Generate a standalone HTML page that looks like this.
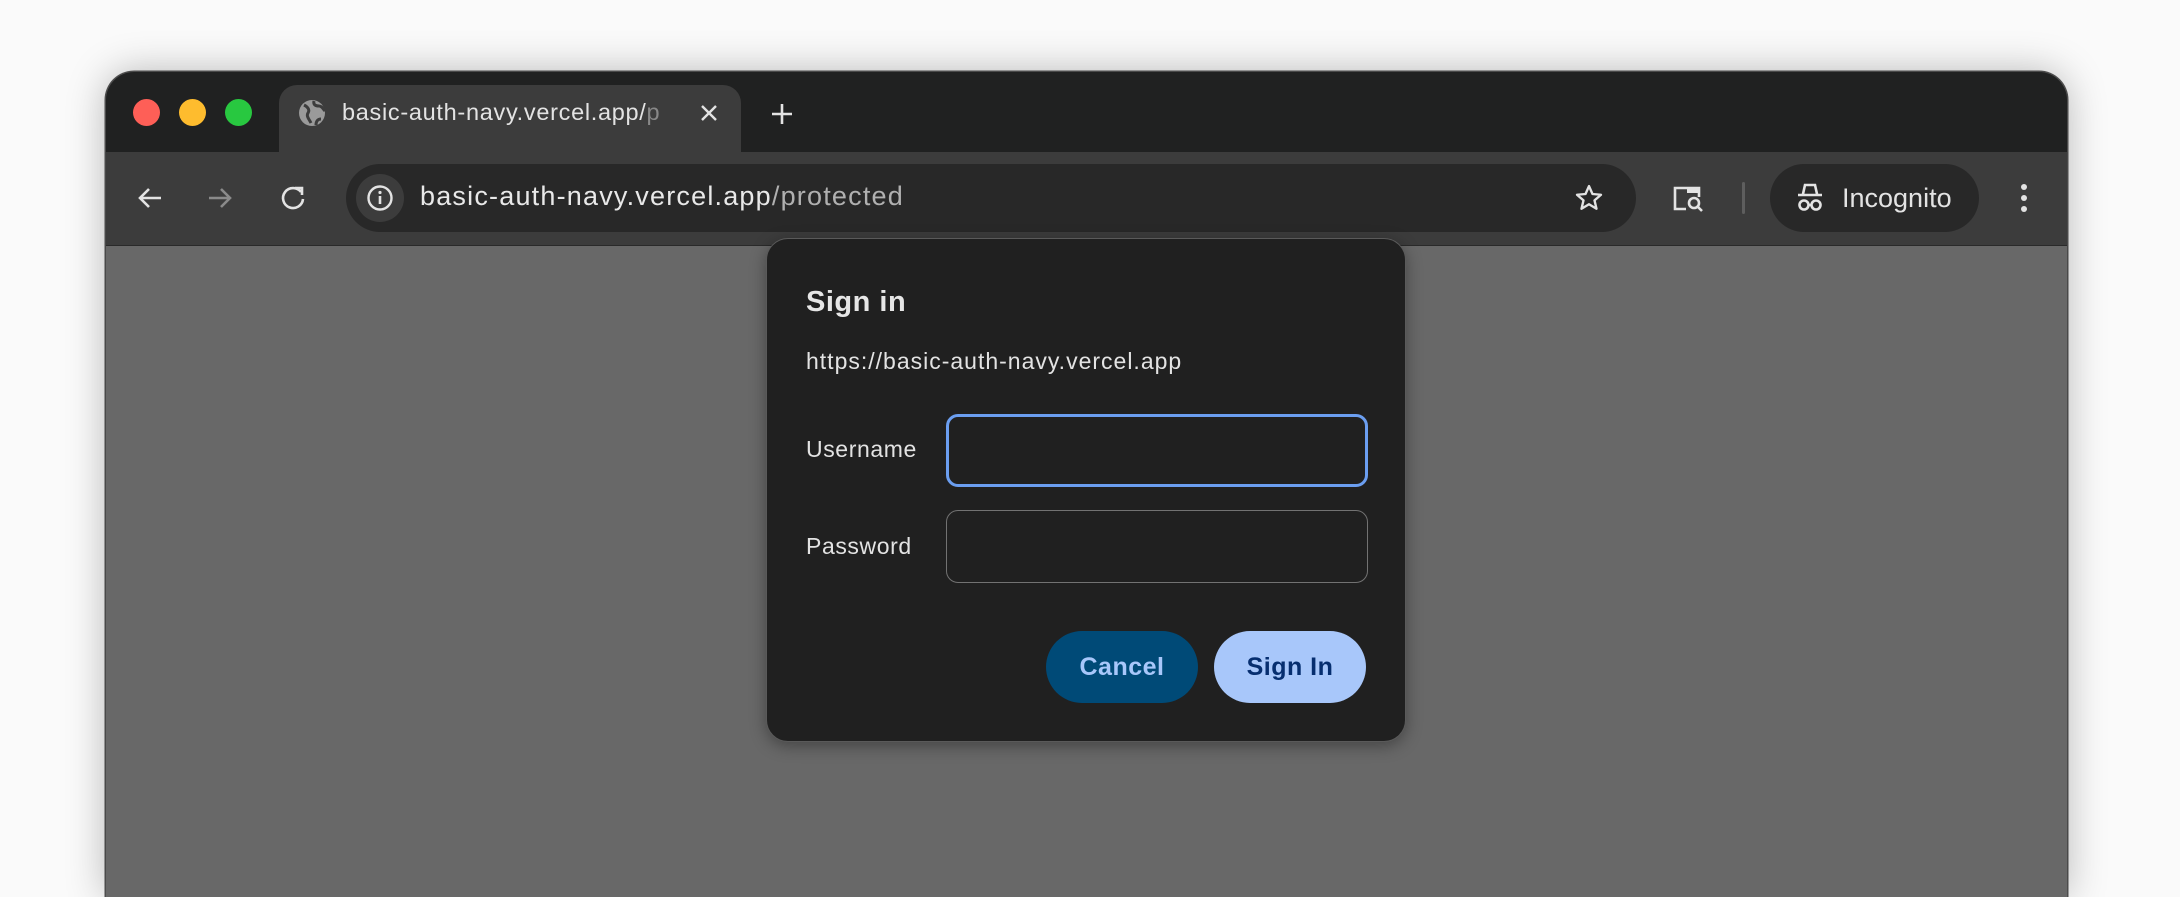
<!DOCTYPE html>
<html><head><meta charset="utf-8"><style>
*{margin:0;padding:0;box-sizing:border-box}
body{width:2180px;height:897px;background:#fafafa;position:relative;overflow:hidden;font-family:"Liberation Sans",sans-serif}
.win{position:absolute;left:106px;top:72px;width:1961px;height:825px;border-radius:28px 28px 0 0;background:#202121;overflow:hidden;box-shadow:0 0 40px rgba(0,0,0,.28),0 0 0 1.5px #555}
.abs{position:absolute}
.tl{position:absolute;top:27px;width:27px;height:27px;border-radius:50%}
.tab{left:173px;top:13px;width:462px;height:70px;background:#3c3c3c;border-radius:18px 18px 0 0}
.toolbar{left:0;top:80px;width:1961px;height:93px;background:#3c3c3c}
.content{left:0;top:173px;width:1961px;height:652px;background:#686868;border-top:1px solid #2a2a2a}
.omni{left:240px;top:12px;width:1290px;height:68px;border-radius:34px;background:#282828}
.txt{color:#e3e3e3;white-space:nowrap}
.dlg{position:absolute;left:766px;top:238px;width:640px;height:504px;background:#202020;border-radius:22px;border:1.5px solid #5a5a5a;box-shadow:0 4px 16px rgba(0,0,0,.35)}
.inp{position:absolute;left:179px;width:422px;height:73px;border-radius:12px}
.btn{position:absolute;top:392px;height:72px;border-radius:36px;font-size:25px;font-weight:bold;text-align:center;line-height:72px;letter-spacing:.5px}
</style></head><body>
<div class="win">
 <div class="tl" style="left:27px;background:#fe5f57"></div>
 <div class="tl" style="left:73px;background:#febc2e"></div>
 <div class="tl" style="left:119px;background:#28c840"></div>
 <div class="abs tab"></div>
 <svg class="abs" style="left:192px;top:27px" width="28" height="28" viewBox="0 0 28 28"><circle cx="14" cy="14" r="13" fill="#9a9a9a"/><path d="M6 6c4 2 6 5 4 8s1 6 3 10M16 2c-1 4 2 5 5 5s4 3 6 5M18 26c0-4 2-6 5-6" stroke="#3c3c3c" stroke-width="3" fill="none"/></svg>
 <div class="abs txt" style="left:236px;top:27px;font-size:23.5px;letter-spacing:.7px;width:340px;overflow:hidden;color:#e3e3e3">basic-auth-navy.vercel.app/<span style="color:#888">p</span></div>
 <svg class="abs" style="left:593px;top:31px" width="20" height="20" viewBox="0 0 20 20"><path d="M3 3L17 17M17 3L3 17" stroke="#e3e3e3" stroke-width="2.4"/></svg>
 <svg class="abs" style="left:664px;top:30px" width="24" height="24" viewBox="0 0 24 24"><path d="M12 2V22M2 12H22" stroke="#e3e3e3" stroke-width="2.6"/></svg>
 <div class="abs toolbar">
  <svg class="abs" style="left:30px;top:32px" width="28" height="28" viewBox="0 0 28 28"><path d="M25 14H5M13 5L4 14L13 23" stroke="#e3e3e3" stroke-width="2.6" fill="none"/></svg>
  <svg class="abs" style="left:100px;top:32px" width="28" height="28" viewBox="0 0 28 28"><path d="M3 14H23M15 5L24 14L15 23" stroke="#8a8a8a" stroke-width="2.6" fill="none"/></svg>
  <svg class="abs" style="left:173px;top:32px" width="28" height="28" viewBox="0 0 28 28"><path d="M22 8A10 10 0 1 0 24 15" stroke="#e3e3e3" stroke-width="2.6" fill="none"/><path d="M16 4H23V11" stroke="#e3e3e3" stroke-width="2.6" fill="none"/></svg>
  <div class="abs omni">
   <div class="abs" style="left:10px;top:10px;width:48px;height:48px;border-radius:50%;background:#3c3c3c"></div>
   <svg class="abs" style="left:20px;top:20px" width="28" height="28" viewBox="0 0 28 28"><circle cx="14" cy="14" r="11.5" stroke="#e3e3e3" stroke-width="2.4" fill="none"/><path d="M14 12V20" stroke="#e3e3e3" stroke-width="2.6"/><circle cx="14" cy="8.5" r="1.6" fill="#e3e3e3"/></svg>
   <div class="abs txt" style="left:74px;top:17px;font-size:27px;letter-spacing:1.2px;color:#e8e8e8">basic-auth-navy.vercel.app<span style="color:#b0b0b0">/protected</span></div>
   <svg class="abs" style="left:1228px;top:19px" width="30" height="30" viewBox="0 0 24 24"><path d="M12 2.5l2.8 6.3 6.8.6-5.2 4.5 1.6 6.7L12 17l-6 3.6 1.6-6.7-5.2-4.5 6.8-.6z" stroke="#e3e3e3" stroke-width="1.9" fill="none" stroke-linejoin="round"/></svg>
  </div>
  <svg class="abs" style="left:1566px;top:31px" width="34" height="32" viewBox="0 0 34 32"><path d="M14 26H3V5H27V14" stroke="#e3e3e3" stroke-width="2.6" fill="none"/><rect x="15" y="5" width="12" height="5" fill="#e3e3e3"/><circle cx="22" cy="20" r="5" stroke="#e3e3e3" stroke-width="2.6" fill="none"/><path d="M25.5 23.5L30 28" stroke="#e3e3e3" stroke-width="2.6"/></svg>
  <div class="abs" style="left:1636px;top:30px;width:3px;height:32px;background:#5e5e5e;border-radius:2px"></div>
  <div class="abs" style="left:1664px;top:12px;width:209px;height:68px;border-radius:34px;background:#282828"></div>
  <svg class="abs" style="left:1688px;top:30px" width="32" height="32" viewBox="0 0 32 32"><path d="M9 12L11 3H21L23 12M4 13H28" stroke="#e3e3e3" stroke-width="2.6" fill="none"/><circle cx="10" cy="23" r="4.5" stroke="#e3e3e3" stroke-width="2.6" fill="none"/><circle cx="22" cy="23" r="4.5" stroke="#e3e3e3" stroke-width="2.6" fill="none"/><path d="M14 23H18" stroke="#e3e3e3" stroke-width="2.4"/></svg>
  <div class="abs txt" style="left:1736px;top:31px;font-size:27px">Incognito</div>
  <div class="abs" style="left:1915px;top:32px;width:6px;height:6px;border-radius:50%;background:#e3e3e3;box-shadow:0 11px 0 #e3e3e3,0 22px 0 #e3e3e3"></div>
 </div>
 <div class="abs content"></div>
</div>
<div class="dlg">
 <div class="abs txt" style="left:39px;top:47px;font-size:29px;font-weight:bold;letter-spacing:.5px;color:#e6e6e6">Sign in</div>
 <div class="abs txt" style="left:39px;top:109px;font-size:23px;letter-spacing:1px">https://basic-auth-navy.vercel.app</div>
 <div class="abs txt" style="left:39px;top:197px;font-size:23px;letter-spacing:.6px">Username</div>
 <div class="inp" style="top:175px;border:3px solid #6b9ef0"></div>
 <div class="abs txt" style="left:39px;top:294px;font-size:23px;letter-spacing:.6px">Password</div>
 <div class="inp" style="top:271px;border:1.5px solid #727272"></div>
 <div class="btn" style="left:279px;width:152px;background:#004a77;color:#a8c7fa">Cancel</div>
 <div class="btn" style="left:447px;width:152px;background:#a8c7fa;color:#062e6f">Sign In</div>
</div>
</body></html>
